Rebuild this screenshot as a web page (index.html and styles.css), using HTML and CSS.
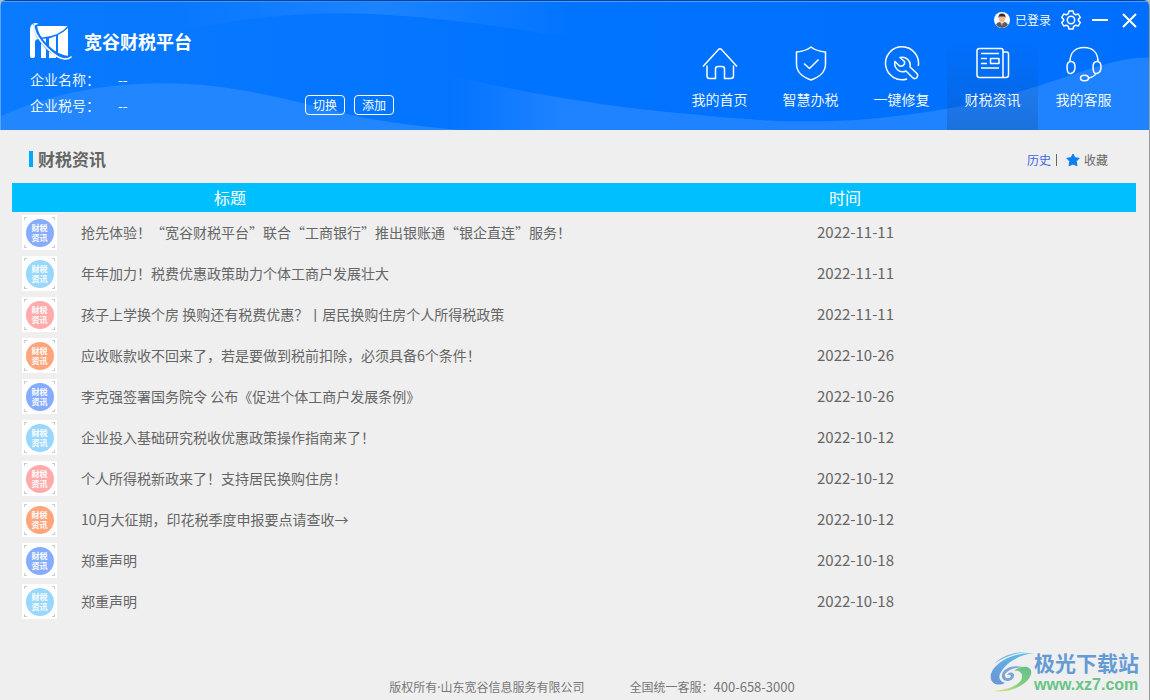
FILE: index.html
```html
<!DOCTYPE html>
<html lang="zh-CN">
<head>
<meta charset="utf-8">
<title>宽谷财税平台</title>
<link rel="stylesheet" href="styles.css">
</head>
<body>
<div class="window">
  <header class="header">
    <svg class="waves" viewBox="0 0 1150 130" preserveAspectRatio="none" aria-hidden="true">
      <defs>
        <linearGradient id="top" gradientUnits="userSpaceOnUse" x1="170" y1="0" x2="580" y2="0">
          <stop offset="0" stop-color="#2287ff" stop-opacity="0"/>
          <stop offset=".5" stop-color="#2287ff" stop-opacity=".8"/>
          <stop offset="1" stop-color="#2287ff" stop-opacity="0"/>
        </linearGradient>
        <linearGradient id="mid" gradientUnits="userSpaceOnUse" x1="450" y1="0" x2="560" y2="0">
          <stop offset="0" stop-color="#1f83ff" stop-opacity="0"/>
          <stop offset="1" stop-color="#1f83ff"/>
        </linearGradient>
      </defs>
      <path fill="url(#top)" d="M140 40C220 18 300 10 370 13C450 17 510 27 590 40V0H140Z"/>
      <path fill="#2287ff" d="M0 116C50 94 100 83 165 83C240 83 310 106 365 118Q410 126 460 130H0Z"/>
      <path fill="url(#mid)" d="M445 74C540 96 610 107 690 114C790 125 860 124 950 108C1010 98 1060 78 1095 67Q1125 57 1150 57V130H445Z"/>
    </svg>
    <div class="company">
      <div class="brand">
        <svg class="logo" viewBox="0 0 42 37" aria-hidden="true">
          <path fill="#fff" d="M6 0Q0 0 0 7V33Q0 35 2 35Q5 35 5 33V19Q5 16 9 16H11L4 5Z"/>
          <path fill="#fff" d="M5 3H37.500Q30 13 12 14.500Q7 10 5 3Z"/>
          <path fill="#fff" d="M11 16L16 15.500V35H11ZM19 15.500L26 13V35H19ZM28 12Q34 9 38 5V35H28Z"/>
          <path fill="none" stroke="#0a79ff" stroke-width="4" d="M5 1C5 16 25 36 41 35"/>
          <path fill="none" stroke="#fff" stroke-width="1.600" stroke-linecap="round" d="M7 .8Q3 1 4 5C7 18 26 36 35 36Q39 36 41 34"/>
        </svg>
        <h1 class="brand-name">宽谷财税平台</h1>
      </div>
      <dl class="fields">
        <dt>企业名称：</dt><dd>--</dd>
        <dt>企业税号：</dt><dd>--</dd>
      </dl>
      <div class="actions">
        <button class="outline" type="button">切换</button>
        <button class="outline" type="button">添加</button>
      </div>
    </div>
    <div class="header-right">
      <div class="controls">
        <span class="user">
          <svg width="16" height="16" viewBox="0 0 16 16" aria-hidden="true">
            <circle cx="8" cy="8" r="8" fill="#fff"/>
            <path d="M2 13Q3 10 6 10H10Q13 10 14 13Q11 16 8 16Q5 16 2 13Z" fill="#555d66"/>
            <path d="M6 9.500L8 14L10 9.500Z" fill="#fff"/>
            <rect x="7.500" y="11" width="1" height="4" fill="#b33"/>
            <ellipse cx="8" cy="6.500" rx="3" ry="4" fill="#f2b98b"/>
            <path d="M4.500 6Q4 1.500 8 1.500Q12 1.500 11.500 6L10.500 4.500H5.500Z" fill="#3b2b24"/>
          </svg>
          已登录
        </span>
        <button class="icon-button gear" type="button" aria-label="设置">
          <svg width="20" height="20" viewBox="0 0 20 20"><path d="M8 1H12L12.700 3.600L14.700 4.800L17.300 4L19.300 7.500L17.400 9.400V10.600L19.300 12.500L17.300 16L14.700 15.200L12.700 16.400L12 19H8L7.300 16.400L5.300 15.200L2.700 16L.7 12.500L2.600 10.600V9.400L.7 7.500L2.700 4L5.300 4.800L7.300 3.600Z"/><circle cx="10" cy="10" r="3.700"/></svg>
        </button>
        <button class="icon-button minimize" type="button" aria-label="最小化">
          <svg width="18" height="16" viewBox="0 0 18 16"><path stroke-width="2" d="M1 8H17"/></svg>
        </button>
        <button class="icon-button" type="button" aria-label="关闭">
          <svg width="15" height="15" viewBox="0 0 15 15"><path stroke-width="2" d="M1 1L14 14M14 1L1 14"/></svg>
        </button>
      </div>
      <nav class="nav">
        <a class="nav-item" href="#home">
          <svg viewBox="0 0 36 36"><path d="M1 20.500L16.500 3.500Q18 2 19.500 3.500L35 20.500M5 19.500V30Q5 32.500 7.500 32.500H13.500V23Q13.500 20.500 16 20.500H20Q22.500 20.500 22.500 23V32.500H28.500Q31.500 32.500 31.500 30V19.500"/></svg>
          我的首页
        </a>
        <a class="nav-item" href="#tax">
          <svg viewBox="0 0 36 36"><path d="M18 1Q23 5 32.500 6V18C32.500 27 26 31 18 34C10 31 3.500 27 3.500 18V6Q13 5 18 1ZM11 17.500L16.500 22.500L25.500 13.500"/></svg>
          智慧办税
        </a>
        <a class="nav-item" href="#repair">
          <svg viewBox="0 0 36 36"><path d="M23 33A16.500 16.500 0 1 1 34.300 20M16 11.500A8 8 0 0 1 26 21L33 27.500Q34.500 30 32.500 32Q30.500 33.500 28.500 31.500L22 25A8 8 0 0 1 11 15.500L15.500 20H18.500L20.500 18V15.500Z"/></svg>
          一键修复
        </a>
        <a class="nav-item active" href="#news" aria-current="page">
          <svg viewBox="0 0 36 36"><path d="M4.500 2.500H26Q28 2.500 28 4.500V31.500H4.500Q2 31.500 2 29V5Q2 2.500 4.500 2.500ZM28 6H31.500Q33.500 6 33.500 8V29Q33.500 31.500 31 31.500H28M6 7.500H24M6 12.500H12M6 17.500H12M6 22H24M15.500 12.500H24V17.500H15.500Z"/></svg>
          财税资讯
        </a>
        <a class="nav-item" href="#service">
          <svg viewBox="0 0 36 36"><path d="M4 16C4 6 10 1.500 18 1.500S32 6 32 16M1 21Q1 15.500 5 15.500T9 21T5 27.500T1 21ZM27 21Q27 15.500 31 15.500T35 21T31 27.500T27 21ZM30 27.500Q28 31 22.500 32"/><ellipse cx="18.500" cy="32" rx="4" ry="2.800"/></svg>
          我的客服
        </a>
      </nav>
    </div>
  </header>

  <main class="main">
    <div class="section-bar">
      <h2 class="section-title">财税资讯</h2>
      <div class="links">
        <a class="history" href="#history">历史</a>
        <a class="favorite" href="#favorites">
          <svg width="14" height="14" viewBox="0 0 14 14" aria-hidden="true"><path fill="#0c7fee" stroke="#0c7fee" stroke-linejoin="round" d="M7 1L8.900 4.700L13.200 5.300L10.200 8.300L11 12.800L7 11L3 12.800L3.800 8.300L.8 5.300L5.100 4.700Z"/></svg>
          收藏
        </a>
      </div>
    </div>
    <table class="news">
      <colgroup><col class="col-icon"><col><col class="col-date"></colgroup>
      <thead><tr><th class="head-title" colspan="2">标题</th><th class="head-date">时间</th></tr></thead>
      <tbody>
        <tr><td><span class="thumb"><span class="disc blue">财税<br>资讯</span></span></td><td class="title">抢先体验！“宽谷财税平台”联合“工商银行”推出银账通“银企直连”服务！</td><td class="date">2022-11-11</td></tr>
        <tr><td><span class="thumb"><span class="disc sky">财税<br>资讯</span></span></td><td class="title">年年加力！税费优惠政策助力个体工商户发展壮大</td><td class="date">2022-11-11</td></tr>
        <tr><td><span class="thumb"><span class="disc pink">财税<br>资讯</span></span></td><td class="title">孩子上学换个房 换购还有税费优惠？丨居民换购住房个人所得税政策</td><td class="date">2022-11-11</td></tr>
        <tr><td><span class="thumb"><span class="disc orange">财税<br>资讯</span></span></td><td class="title">应收账款收不回来了，若是要做到税前扣除，必须具备6个条件！</td><td class="date">2022-10-26</td></tr>
        <tr><td><span class="thumb"><span class="disc blue">财税<br>资讯</span></span></td><td class="title">李克强签署国务院令 公布《促进个体工商户发展条例》</td><td class="date">2022-10-26</td></tr>
        <tr><td><span class="thumb"><span class="disc sky">财税<br>资讯</span></span></td><td class="title">企业投入基础研究税收优惠政策操作指南来了！</td><td class="date">2022-10-12</td></tr>
        <tr><td><span class="thumb"><span class="disc pink">财税<br>资讯</span></span></td><td class="title">个人所得税新政来了！支持居民换购住房！</td><td class="date">2022-10-12</td></tr>
        <tr><td><span class="thumb"><span class="disc orange">财税<br>资讯</span></span></td><td class="title">10月大征期，印花税季度申报要点请查收→</td><td class="date">2022-10-12</td></tr>
        <tr><td><span class="thumb"><span class="disc blue">财税<br>资讯</span></span></td><td class="title">郑重声明</td><td class="date">2022-10-18</td></tr>
        <tr><td><span class="thumb"><span class="disc sky">财税<br>资讯</span></span></td><td class="title">郑重声明</td><td class="date">2022-10-18</td></tr>
      </tbody>
    </table>
  </main>

  <footer class="footer">
    <span>版权所有·山东宽谷信息服务有限公司</span>
    <span>全国统一客服：<span class="phone">400-658-3000</span></span>
  </footer>

  <div class="watermark">
    <svg width="44" height="40" viewBox="0 0 44 40" aria-hidden="true">
      <defs>
        <linearGradient id="swirl-a" x1="1" y1="0" x2="0" y2="1"><stop offset="0" stop-color="#5ac4ea"/><stop offset="1" stop-color="#6b93d6"/></linearGradient>
        <linearGradient id="swirl-b" x1="1" y1="0" x2="0" y2="1"><stop offset="0" stop-color="#62bd88"/><stop offset=".5" stop-color="#83cf83"/><stop offset="1" stop-color="#f0e48a"/></linearGradient>
      </defs>
      <path fill="url(#swirl-a)" d="M44 1C22 0 4 11 1 22C-1 31 7 35 15 31C9 29 8 25 11 20C16 11 28 3 44 1Z"/>
      <path fill="#69b9e3" d="M36 0C22 0 11 5 4 12C14 5 26 1 36 0Z"/>
      <path fill="url(#swirl-b)" d="M24 19C32 12 43 14 41 22C39 32 20 42 3 39C19 38 33 32 32 24C32 20 28 18 24 19Z"/>
      <path fill="#78a5da" d="M33 15C20 12 11 18 12 25C13 31 23 30 24 24C25 20 19 19 17 23C21 22 22 25 19 26C15 27 13 23 17 20C21 16 27 16 33 15Z"/>
    </svg>
    <div class="watermark-text"><span class="site">极光下载站</span><span class="domain">www.xz7.com</span></div>
  </div>
</div>
</body>
</html>
```
FILE: styles.css
```css
* { box-sizing: border-box; }

body {
  margin: 0;
  background: #b8bcc4;
  color: #666;
  font-family: "Noto Sans CJK SC", sans-serif;
  font-size: 14px;
  line-height: 20px;
}

h1, h2, dl, dd { margin: 0; }
a { color: inherit; text-decoration: none; }

button {
  padding: 0;
  background: none;
  border: 0;
  color: #fff;
  font: inherit;
  cursor: pointer;
}

.window {
  position: relative;
  display: flex;
  flex-direction: column;
  min-height: 100vh;
  overflow: hidden;
  background: #efefef;
  border-right: 1px solid #999;
  border-radius: 6px 6px 0 0;
}

/* Header */
.header {
  position: relative;
  display: flex;
  justify-content: space-between;
  min-height: 130px;
  background: linear-gradient(90deg, #0a7aff, #0073ff 50%, #006fff);
  border-top: 1px solid #00439b;
  border-left: 1px solid #59a5ff;
  box-shadow: inset 0 1px #4c9dff;
  color: #fff;
  font-weight: 350;
}

.waves {
  position: absolute;
  inset: 0;
  width: 100%;
  height: 100%;
}

.company {
  position: relative;
  display: grid;
  grid-template-columns: 275px auto;
  align-content: start;
  padding: 21px 0 0 29px;
}

.brand {
  display: flex;
  grid-column: 1 / 3;
  gap: 12px;
  align-items: center;
  height: 38px;
}

.logo { width: 42px; height: 37px; }
.brand-name { font-size: 18px; line-height: 24px; }

.fields {
  display: grid;
  grid-template-columns: 88px auto;
  row-gap: 6px;
  padding-top: 9px;
}

.actions {
  display: flex;
  gap: 9px;
  align-self: end;
}

.outline {
  width: 40px;
  height: 20px;
  border: 1px solid #fff;
  border-radius: 4px;
  font-size: 12px;
  font-weight: 400;
  line-height: 16px;
}

.header-right {
  position: relative;
  display: flex;
  flex-direction: column;
  align-items: flex-end;
}

.controls {
  display: flex;
  align-items: center;
  height: 38px;
  padding-right: 12px;
}

.user {
  display: flex;
  gap: 5px;
  align-items: center;
  margin-right: 10px;
  font-size: 12px;
}

.icon-button { display: flex; }
.gear { margin-right: 10px; }
.minimize { margin-right: 13px; }

.icon-button svg,
.nav-item svg {
  fill: none;
  stroke: #fff;
  stroke-width: 1.5;
  stroke-linejoin: round;
}

.nav {
  display: flex;
  flex: 1;
  padding-right: 20px;
}

.nav-item {
  display: flex;
  flex-direction: column;
  gap: 7px;
  align-items: center;
  width: 91px;
  padding-top: 7px;
}

.nav-item svg { width: 36px; height: 36px; }
.active { background: linear-gradient(rgba(20, 80, 160, 0), rgba(20, 80, 160, .35)); }

/* Content */
.main { padding: 18px 13px 0 12px; }

.section-bar {
  display: flex;
  justify-content: space-between;
  align-items: center;
  height: 24px;
  margin-bottom: 11px;
  padding: 0 28px 0 17px;
}

.section-title {
  margin-bottom: 2px;
  padding-left: 5px;
  border-left: 4px solid #00a8ff;
  font-size: 17px;
  line-height: 16px;
}

.links {
  display: flex;
  align-items: center;
  font-size: 12px;
  line-height: 12px;
}

.history {
  padding-right: 5px;
  border-right: 1px solid #666;
  color: #4169e1;
}

.favorite {
  display: flex;
  gap: 4px;
  align-items: center;
  padding-left: 9px;
}

.news {
  width: 100%;
  border-collapse: collapse;
  table-layout: fixed;
}

.col-icon { width: 57px; }
.col-date { width: 331px; }

th {
  height: 29px;
  padding: 0 0 2px;
  background: #00bfff;
  color: #fff;
  font-size: 16px;
  font-weight: 400;
  text-align: left;
}

.head-title { padding-left: 202px; }
.head-date { padding-left: 24px; }

td {
  height: 41px;
  padding: 0 12px 2px;
}

td:first-child { padding: 0 0 0 10px; }
.date { font-size: 15px; }

.thumb {
  display: flex;
  align-items: center;
  justify-content: center;
  width: 35px;
  height: 35px;
  background:
    linear-gradient(#fff, #fff) center / 25px 35px no-repeat,
    linear-gradient(#fff, #fff) center / 35px 25px no-repeat,
    linear-gradient(#fff, #fff) center / 29px 29px no-repeat,
    linear-gradient(#ccc, #ccc) center / 31px 31px no-repeat,
    #fff;
}

.disc {
  width: 28px;
  height: 28px;
  padding-top: 4px;
  border-radius: 50%;
  color: #fff;
  font-size: 8px;
  font-weight: 700;
  line-height: 10px;
  text-align: center;
}

.blue { background: #86acff; }
.sky { background: #98d8ff; }
.pink { background: #ffabab; }
.orange { background: #ffa57b; }

/* Footer */
.footer {
  display: flex;
  gap: 45px;
  align-items: baseline;
  justify-content: center;
  margin-top: auto;
  padding: 0 0 2px 35px;
  color: #777;
  font-family: "Noto Sans", "Noto Sans CJK SC", sans-serif;
  font-size: 12px;
}

.phone {
  font-family: "Noto Sans CJK SC", sans-serif;
  font-size: 13px;
}

.watermark {
  position: absolute;
  right: 10px;
  bottom: 6px;
  display: flex;
  align-items: center;
}

.watermark-text {
  display: flex;
  flex-direction: column;
}

.site {
  color: #659bd5;
  font-size: 21px;
  font-weight: 700;
  line-height: 27px;
}

.domain {
  color: #68c485;
  font-family: "Liberation Sans", Arial, sans-serif;
  font-size: 16px;
  font-weight: 700;
  line-height: 18px;
}
```
